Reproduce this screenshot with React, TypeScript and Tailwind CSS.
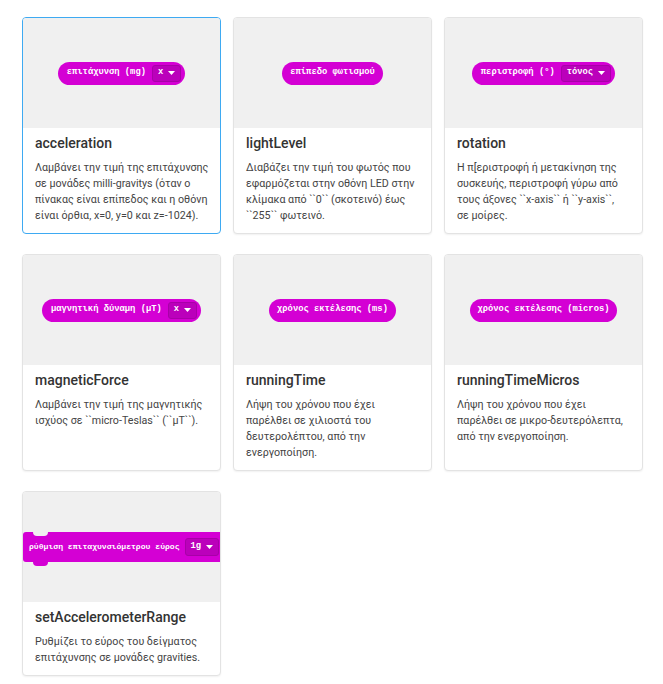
import React from "react";

const MONO = "font-['Liberation_Mono','DejaVu_Sans_Mono',monospace] font-bold";

function Tri() {
  return (
    <svg width="7" height="4" viewBox="0 0 7 4" className="ml-[5px] shrink-0">
      <path d="M0 0 L7 0 L3.5 4 Z" fill="white" />
    </svg>
  );
}

function Drop({ label, size = "text-[8.8px]" }: { label: string; size?: string }) {
  return (
    <div className={`ml-[6px] flex h-[17px] items-center rounded-[3px] border border-[#a800a8] bg-[#bb00bb] px-[5px] text-white ${size}`}>
      <span>{label}</span>
      <Tri />
    </div>
  );
}

function Pill({ text, drop }: { text: string; drop?: string }) {
  return (
    <div
      className={`flex h-[23px] items-center whitespace-nowrap rounded-full bg-[#d400d4] ${drop ? "pl-[9px] pr-[4px]" : "px-[8px]"} text-[8.8px] text-white ${MONO}`}
    >
      <span>{text}</span>
      {drop && <Drop label={drop} />}
    </div>
  );
}

function SetBlock() {
  return (
    <div className={`relative flex h-[30px] w-[206px] shrink-0 items-center whitespace-nowrap rounded-l-[3px] bg-[#d400d4] pl-[6px] text-[8.1px] text-white ${MONO}`}>
      <div className="absolute left-[10px] top-0 h-[4px] w-[15px] rounded-b-[4px] bg-[#f0f0f0]" />
      <div className="absolute -bottom-[4px] left-[10px] h-[4px] w-[15px] rounded-b-[4px] bg-[#d400d4]" />
      <span>ρύθμιση επιταχυνσιόμετρου εύρος</span>
      <div className="ml-[5px] flex h-[18px] items-center rounded-[3px] border border-[#a800a8] bg-[#bb00bb] px-[5px] text-[8.8px]">
        <span>1g</span>
        <Tri />
      </div>
    </div>
  );
}

type Item = { title: string; lines: string[]; block: React.ReactNode; selected?: boolean; left?: boolean };

const items: Item[] = [
  {
    title: "acceleration",
    lines: [
      "Λαμβάνει την τιμή της επιτάχυνσης",
      "σε μονάδες milli-gravitys (όταν ο",
      "πίνακας είναι επίπεδος και η οθόνη",
      "είναι όρθια, x=0, y=0 και z=-1024).",
    ],
    block: <Pill text="επιτάχυνση (mg)" drop="x" />,
    selected: true,
  },
  {
    title: "lightLevel",
    lines: [
      "Διαβάζει την τιμή του φωτός που",
      "εφαρμόζεται στην οθόνη LED στην",
      "κλίμακα από ``0`` (σκοτεινό) έως",
      "``255`` φωτεινό.",
    ],
    block: <Pill text="επίπεδο φωτισμού" />,
  },
  {
    title: "rotation",
    lines: [
      "Η π[εριστροφή ή μετακίνηση της",
      "συσκευής, περιστροφή γύρω από",
      "τους άξονες ``x-axis`` ή ``y-axis``,",
      "σε μοίρες.",
    ],
    block: <Pill text="περιστροφή (°)" drop="τόνος" />,
  },
  {
    title: "magneticForce",
    lines: ["Λαμβάνει την τιμή της μαγνητικής", "ισχύος σε ``micro-Teslas`` (``μT``)."],
    block: <Pill text="μαγνητική δύναμη (μT)" drop="x" />,
  },
  {
    title: "runningTime",
    lines: ["Λήψη του χρόνου που έχει", "παρέλθει σε χιλιοστά του", "δευτερολέπτου, από την", "ενεργοποίηση."],
    block: <Pill text="χρόνος εκτέλεσης (ms)" />,
  },
  {
    title: "runningTimeMicros",
    lines: ["Λήψη του χρόνου που έχει", "παρέλθει σε μικρο-δευτερόλεπτα,", "από την ενεργοποίηση."],
    block: <Pill text="χρόνος εκτέλεσης (micros)" />,
  },
  {
    title: "setAccelerometerRange",
    lines: ["Ρυθμίζει το εύρος του δείγματος", "επιτάχυνσης σε μονάδες gravities."],
    block: <SetBlock />,
    left: true,
  },
];

function Card({ it }: { it: Item }) {
  return (
    <div
      className={`flex flex-col overflow-hidden rounded-[4px] border bg-white ${
        it.selected ? "border-[#3eaaf2]" : "border-[#e3e3e3] shadow-[0_1px_2px_rgba(0,0,0,0.06)]"
      }`}
    >
      <div className={`flex h-[110px] items-center overflow-hidden bg-[#f0f0f0] ${it.left ? "justify-start" : "justify-center"}`}>
        {it.block}
      </div>
      <div className="px-3 pb-[9px] pt-[5px] font-['Roboto','Liberation_Sans',sans-serif]">
        <div className="text-[14px] font-medium leading-[20px] text-[#333333]">{it.title}</div>
        <div className="mt-[7px] text-[10.7px] leading-[16px] text-[#444444]">
          {it.lines.map((l, i) => (
            <div key={i} className="whitespace-nowrap">
              {l}
            </div>
          ))}
        </div>
      </div>
    </div>
  );
}

export default function App() {
  return (
    <div className="min-h-[684px] w-[663px] bg-white pl-[22px] pr-[20px] pt-[17px]">
      <div className="grid grid-cols-3 items-stretch gap-x-3 gap-y-5">
        {items.map((it) => (
          <Card key={it.title} it={it} />
        ))}
      </div>
    </div>
  );
}
